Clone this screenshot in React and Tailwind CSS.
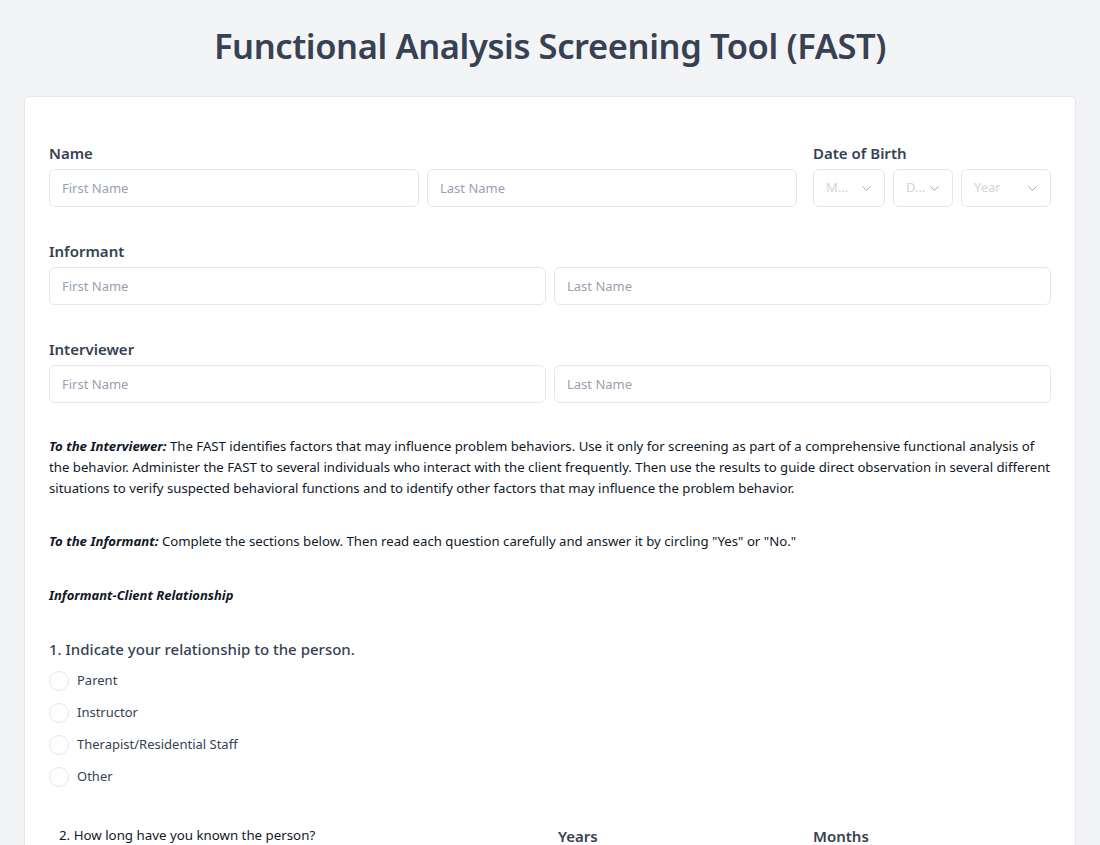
import React from 'react';
import { ChevronDown } from 'lucide-react';

const Field = ({ placeholder, className = '' }) => (
  <input
    type="text"
    placeholder={placeholder}
    className={`h-[38px] rounded-md border border-gray-200 bg-white px-3 text-[13px] text-gray-700 placeholder:text-gray-400 outline-none ${className}`}
  />
);

const Select = ({ label, className = '' }) => (
  <div className={`flex h-[38px] items-center justify-between rounded-md border border-gray-200 bg-white pl-3 pr-2.5 text-[13px] text-gray-300 ${className}`}>
    <span>{label}</span>
    <ChevronDown size={15} strokeWidth={1.5} className="text-gray-400" />
  </div>
);

const Label = ({ children }) => (
  <label className="mb-[6px] block text-[15px] font-semibold leading-5 text-gray-700">{children}</label>
);

const NameBlock = ({ title }) => (
  <div>
    <Label>{title}</Label>
    <div className="grid grid-cols-2 gap-2">
      <Field placeholder="First Name" className="w-full" />
      <Field placeholder="Last Name" className="w-full" />
    </div>
  </div>
);

const App = () => {
  const relations = ['Parent', 'Instructor', 'Therapist/Residential Staff', 'Other'];

  return (
    <div className="min-h-screen bg-gray-100 px-6 font-['Noto_Sans',sans-serif] text-gray-700">
      <h1 className="pt-[22px] pb-[26px] text-center text-[34.5px] font-semibold leading-[48px] tracking-[-0.4px] text-gray-700">
        Functional Analysis Screening Tool (FAST)
      </h1>
      <div className="rounded border border-gray-200 bg-white px-6 pt-[46px] pb-10">
        <div className="flex gap-4">
          <div className="flex-1">
            <Label>Name</Label>
            <div className="grid grid-cols-2 gap-2">
              <Field placeholder="First Name" className="w-full" />
              <Field placeholder="Last Name" className="w-full" />
            </div>
          </div>
          <div className="w-[238px]">
            <Label>Date of Birth</Label>
            <div className="flex gap-2">
              <Select label="M..." className="w-[72px]" />
              <Select label="D..." className="w-[60px]" />
              <Select label="Year" className="w-[90px]" />
            </div>
          </div>
        </div>

        <div className="mt-[34px]">
          <NameBlock title="Informant" />
        </div>
        <div className="mt-[34px]">
          <NameBlock title="Interviewer" />
        </div>

        <p className="mt-[33px] text-[13.2px] leading-[21px] text-gray-900">
          <b><i>To the Interviewer:</i></b> The FAST identifies factors that may influence problem behaviors. Use it only for screening as part of a comprehensive functional analysis of the behavior. Administer the FAST to several individuals who interact with the client frequently. Then use the results to guide direct observation in several different situations to verify suspected behavioral functions and to identify other factors that may influence the problem behavior.
        </p>

        <p className="mt-[32px] text-[13.2px] leading-[21px] text-gray-900">
          <b><i>To the Informant:</i></b> Complete the sections below. Then read each question carefully and answer it by circling "Yes" or "No."
        </p>

        <p className="mt-[33px] text-[13px] font-bold italic leading-[21px] text-gray-900">
          Informant-Client Relationship
        </p>

        <div className="mt-[32px]">
          <p className="text-[15px] font-medium leading-[22px] text-gray-700">1. Indicate your relationship to the person.</p>
          <div className="mt-[11px] flex flex-col gap-3">
            {relations.map((r) => (
              <label key={r} className="flex h-5 items-center gap-2 text-[13px] text-gray-700">
                <span className="h-5 w-5 rounded-full border border-gray-200 bg-white" />
                {r}
              </label>
            ))}
          </div>
        </div>

        <div className="mt-[38px] flex h-[22px] items-center text-[13.3px]">
          <span className="w-[509px] pl-2.5 text-gray-900">2. How long have you known the person?</span>
          <span className="w-[255px] text-[15px] font-semibold text-gray-700">Years</span>
          <span className="text-[15px] font-semibold text-gray-700">Months</span>
        </div>
      </div>
    </div>
  );
};

export default App;
